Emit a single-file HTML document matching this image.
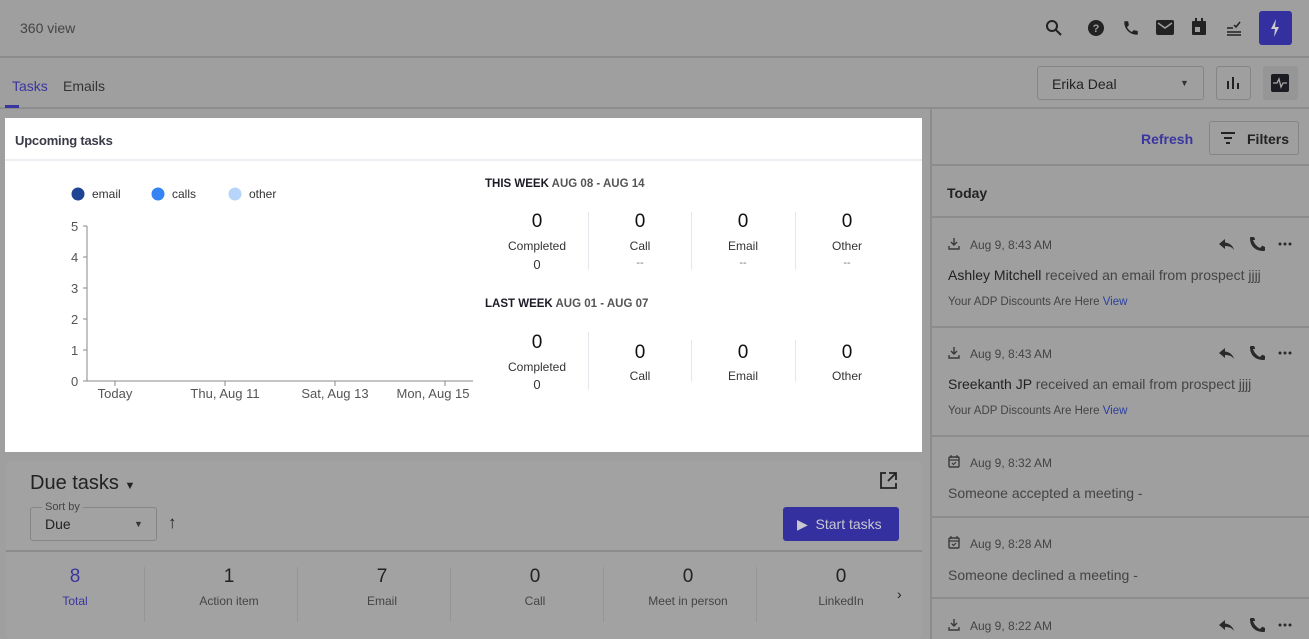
<!DOCTYPE html><html><head><style>
*{box-sizing:border-box;margin:0;padding:0}
body{width:1309px;height:639px;background:#9f9f9f;font-family:"Liberation Sans",sans-serif;color:#26262e;position:relative;overflow:hidden}
.a{position:absolute;white-space:nowrap}
.hl{position:absolute;background:#8c8c8c;height:2px}
.c{text-align:center;transform:translateX(-50%)}
svg{position:absolute}
</style></head><body>
<svg width="0" height="0"><defs>
<g id="acts"><path d="M8 3L2 8l6 5V10c4 0 7 1 9 4-1-4-4-7-9-7.5z" fill="#2a2a2a"/><path d="M36 4c1 3 3 6 7 8l2-2c.3-.3.6-.3 1 0l2 1v3c0 .5-.3 1-1 1C38 15 33 10 33 2c0-.6.4-1 1-1h3l1 2c.1.4 0 .7-.2 1z" fill="#2a2a2a"/><circle cx="63" cy="8" r="1.5" fill="#2a2a2a"/><circle cx="68" cy="8" r="1.5" fill="#2a2a2a"/><circle cx="73" cy="8" r="1.5" fill="#2a2a2a"/></g>
<g id="dl"><path d="M6 1v7M3 5l3 3 3-3M1 9v3h10V9" stroke="#3a3a3a" stroke-width="1.4" fill="none"/></g>
<g id="cal"><rect x="1" y="2" width="10" height="10" rx="1" fill="none" stroke="#3a3a3a" stroke-width="1.4"/><path d="M3 0v3M9 0v3M1 5h10M4 8l1.5 1.5L8 7" stroke="#3a3a3a" stroke-width="1.2" fill="none"/></g>
</defs></svg>
<div class="a" style="left:20px;top:20px;font-size:14px;color:#444">360 view</div>
<svg style="left:1045px;top:19px" width="18" height="18" viewBox="0 0 18 18"><circle cx="7" cy="7" r="5" fill="none" stroke="#222" stroke-width="2"/><path d="M11 11l5 5" stroke="#222" stroke-width="2"/></svg>
<svg style="left:1087px;top:19px" width="18" height="18"><circle cx="9" cy="9" r="8" fill="#222"/><text x="9" y="13" font-size="11" fill="#9f9f9f" text-anchor="middle" font-weight="bold" font-family="Liberation Sans">?</text></svg>
<svg style="left:1122px;top:19px" width="18" height="18" viewBox="0 0 24 24"><path d="M6.6 10.8c1.4 2.8 3.8 5.1 6.6 6.6l2.2-2.2c.3-.3.7-.4 1-.2 1.1.4 2.3.6 3.6.6.6 0 1 .4 1 1V20c0 .6-.4 1-1 1C10.6 21 3 13.4 3 4c0-.6.4-1 1-1h3.5c.6 0 1 .4 1 1 0 1.3.2 2.5.6 3.6.1.3 0 .7-.2 1z" fill="#222"/></svg>
<svg style="left:1156px;top:20px" width="18" height="16"><rect width="18" height="15" rx="2" fill="#222"/><path d="M2 3l7 5 7-5" stroke="#9f9f9f" stroke-width="1.6" fill="none"/></svg>
<svg style="left:1191px;top:18px" width="16" height="18"><rect x="1" y="3" width="14" height="14" rx="1" fill="#222"/><rect x="4" y="0" width="2" height="4" fill="#222"/><rect x="10" y="0" width="2" height="4" fill="#222"/><rect x="4" y="9" width="5" height="5" fill="#9f9f9f"/></svg>
<svg style="left:1226px;top:20px" width="16" height="16"><path d="M1 12h14M1 15h14M1 8h6M8 5l2 2 4-5" stroke="#222" stroke-width="1.5" fill="none"/></svg>
<div class="a" style="left:1259px;top:11px;width:33px;height:34px;background:#3430a0;border-radius:3px"></div>
<svg style="left:1269px;top:19px" width="12" height="18"><path d="M7 0L2 10h4l-1 8 5-10H6z" fill="#ccc"/></svg>
<div class="hl" style="left:0;top:56px;width:1309px"></div>
<div class="a" style="left:12px;top:78px;font-size:14px;color:#3a36a0">Tasks</div>
<div class="a" style="left:63px;top:78px;font-size:14px;color:#333">Emails</div>
<div class="hl" style="left:0;top:107px;width:1309px"></div>
<div class="a" style="left:5px;top:105px;width:14px;height:3px;background:#3a36a0"></div>
<div class="a" style="left:1037px;top:66px;width:167px;height:34px;border:1px solid #858585;border-radius:3px"></div>
<div class="a" style="left:1052px;top:76px;font-size:14px;color:#222">Erika Deal</div>
<div class="a" style="left:1180px;top:78px;font-size:9px;color:#333">▼</div>
<div class="a" style="left:1216px;top:66px;width:35px;height:34px;border:1px solid #858585;border-radius:3px"></div>
<svg style="left:1226px;top:75px" width="14" height="14"><path d="M2 6v8M7 2v12M12 8v6" stroke="#222" stroke-width="2"/></svg>
<div class="a" style="left:1263px;top:66px;width:35px;height:34px;background:#969696;border-radius:3px"></div>
<svg style="left:1271px;top:74px" width="18" height="18"><rect width="18" height="18" rx="2" fill="#1b1b22"/><path d="M2 9h4l2-4 2 8 2-4h4" stroke="#aaa" stroke-width="1.3" fill="none"/></svg>
<div class="a" style="left:930px;top:108px;width:2px;height:531px;background:#8c8c8c"></div>
<div class="a" style="left:1141px;top:131px;font-size:14px;color:#3a36a0;font-weight:bold">Refresh</div>
<div class="a" style="left:1209px;top:121px;width:90px;height:34px;border:1px solid #858585;border-radius:3px"></div>
<svg style="left:1221px;top:132px" width="14" height="12"><path d="M0 1h14M3 6h8M5 11h4" stroke="#222" stroke-width="2"/></svg>
<div class="a" style="left:1247px;top:131px;font-size:14px;font-weight:bold;color:#222">Filters</div>
<div class="hl" style="left:932px;top:164px;width:377px"></div>
<div class="a" style="left:947px;top:185px;font-size:14px;font-weight:bold;color:#222">Today</div>
<div class="hl" style="left:932px;top:216px;width:377px"></div>
<svg style="left:948px;top:237px" width="12" height="13"><use href="#dl"/></svg>
<div class="a" style="left:970px;top:238px;font-size:12px;color:#444">Aug 9, 8:43 AM</div>
<svg style="left:1217px;top:236px" width="80" height="17"><use href="#acts"/></svg>
<div class="a" style="left:948px;top:267px;font-size:14px;color:#222">Ashley Mitchell <span style="color:#444">received an email from prospect jjjj</span></div>
<div class="a" style="left:948px;top:296px;font-size:11.5px;color:#444">Your ADP Discounts Are Here <span style="color:#2a3fa0">View</span></div>
<div class="hl" style="left:932px;top:326px;width:377px"></div>
<svg style="left:948px;top:346px" width="12" height="13"><use href="#dl"/></svg>
<div class="a" style="left:970px;top:347px;font-size:12px;color:#444">Aug 9, 8:43 AM</div>
<svg style="left:1217px;top:345px" width="80" height="17"><use href="#acts"/></svg>
<div class="a" style="left:948px;top:376px;font-size:14px;color:#222">Sreekanth JP <span style="color:#444">received an email from prospect jjjj</span></div>
<div class="a" style="left:948px;top:405px;font-size:11.5px;color:#444">Your ADP Discounts Are Here <span style="color:#2a3fa0">View</span></div>
<div class="hl" style="left:932px;top:435px;width:377px"></div>
<svg style="left:948px;top:455px" width="12" height="13"><use href="#cal"/></svg>
<div class="a" style="left:970px;top:456px;font-size:12px;color:#444">Aug 9, 8:32 AM</div>
<div class="a" style="left:948px;top:485px;font-size:14px;color:#444">Someone accepted a meeting -</div>
<div class="hl" style="left:932px;top:516px;width:377px"></div>
<svg style="left:948px;top:536px" width="12" height="13"><use href="#cal"/></svg>
<div class="a" style="left:970px;top:537px;font-size:12px;color:#444">Aug 9, 8:28 AM</div>
<div class="a" style="left:948px;top:567px;font-size:14px;color:#444">Someone declined a meeting -</div>
<div class="hl" style="left:932px;top:597px;width:377px"></div>
<svg style="left:948px;top:618px" width="12" height="13"><use href="#dl"/></svg>
<div class="a" style="left:970px;top:619px;font-size:12px;color:#444">Aug 9, 8:22 AM</div>
<svg style="left:1217px;top:617px" width="80" height="17"><use href="#acts"/></svg>
<div class="a" style="left:5px;top:118px;width:917px;height:334px;background:#fff"></div>
<div class="a" style="left:5px;top:159px;width:917px;height:2px;background:#eceef4"></div>
<div class="a" style="left:15px;top:133px;font-size:13px;color:#3a3a48;font-weight:bold;letter-spacing:-0.2px">Upcoming tasks</div>
<svg style="left:60px;top:180px" width="420" height="230" font-family="Liberation Sans" font-size="13" fill="#555">
<circle cx="18" cy="14" r="6.5" fill="#1d4593"/><text x="32" y="18" fill="#333" font-size="12">email</text>
<circle cx="98" cy="14" r="6.5" fill="#3584f5"/><text x="112" y="18" fill="#333" font-size="12">calls</text>
<circle cx="175" cy="14" r="6.5" fill="#b7d4fb"/><text x="189" y="18" fill="#333" font-size="12">other</text>
<path d="M27 46v155h386" stroke="#888" fill="none"/>
<g stroke="#888"><path d="M23 46h4M23 77h4M23 108h4M23 139h4M23 170h4M23 201h4M55 201v5M165 201v5M275 201v5M385 201v5"/></g>
<text x="11" y="51">5</text><text x="11" y="82">4</text><text x="11" y="113">3</text><text x="11" y="144">2</text><text x="11" y="175">1</text><text x="11" y="206">0</text>
<text x="55" y="218" text-anchor="middle">Today</text><text x="165" y="218" text-anchor="middle">Thu, Aug 11</text><text x="275" y="218" text-anchor="middle">Sat, Aug 13</text><text x="373" y="218" text-anchor="middle">Mon, Aug 15</text>
</svg>
<div class="a" style="left:485px;top:178px;font-size:11.5px;font-weight:bold;color:#1c1c28">THIS WEEK <span style="color:#555">AUG 08 - AUG 14</span></div>
<div class="a" style="left:485px;top:298px;font-size:11.5px;font-weight:bold;color:#1c1c28">LAST WEEK <span style="color:#555">AUG 01 - AUG 07</span></div>
<div class="a" style="left:588px;top:212px;width:1px;height:58px;background:#e6e6ec"></div>
<div class="a" style="left:691px;top:212px;width:1px;height:58px;background:#e6e6ec"></div>
<div class="a" style="left:795px;top:212px;width:1px;height:58px;background:#e6e6ec"></div>
<div class="a" style="left:588px;top:332px;width:1px;height:58px;background:#e6e6ec"></div>
<div class="a" style="left:691px;top:340px;width:1px;height:42px;background:#e6e6ec"></div>
<div class="a" style="left:795px;top:340px;width:1px;height:42px;background:#e6e6ec"></div>
<div class="a c" style="left:537px;top:212px;font-size:19px;color:#111;line-height:1.1">0</div>
<div class="a c" style="left:537px;top:239px;font-size:12px;color:#333">Completed</div>
<div class="a c" style="left:537px;top:257px;font-size:13px;color:#333">0</div>
<div class="a c" style="left:640px;top:212px;font-size:19px;color:#111;line-height:1.1">0</div>
<div class="a c" style="left:640px;top:239px;font-size:12px;color:#333">Call</div>
<div class="a c" style="left:640px;top:257px;font-size:11px;color:#777">--</div>
<div class="a c" style="left:743px;top:212px;font-size:19px;color:#111;line-height:1.1">0</div>
<div class="a c" style="left:743px;top:239px;font-size:12px;color:#333">Email</div>
<div class="a c" style="left:743px;top:257px;font-size:11px;color:#777">--</div>
<div class="a c" style="left:847px;top:212px;font-size:19px;color:#111;line-height:1.1">0</div>
<div class="a c" style="left:847px;top:239px;font-size:12px;color:#333">Other</div>
<div class="a c" style="left:847px;top:257px;font-size:11px;color:#777">--</div>
<div class="a c" style="left:537px;top:333px;font-size:19px;color:#111;line-height:1.1">0</div>
<div class="a c" style="left:537px;top:360px;font-size:12px;color:#333">Completed</div>
<div class="a c" style="left:537px;top:377px;font-size:13px;color:#333">0</div>
<div class="a c" style="left:640px;top:343px;font-size:19px;color:#111;line-height:1.1">0</div>
<div class="a c" style="left:640px;top:369px;font-size:12px;color:#333">Call</div>
<div class="a c" style="left:743px;top:343px;font-size:19px;color:#111;line-height:1.1">0</div>
<div class="a c" style="left:743px;top:369px;font-size:12px;color:#333">Email</div>
<div class="a c" style="left:847px;top:343px;font-size:19px;color:#111;line-height:1.1">0</div>
<div class="a c" style="left:847px;top:369px;font-size:12px;color:#333">Other</div>
<div class="a" style="left:6px;top:461px;width:916px;height:178px;background:#a2a2a2;border-radius:4px"></div>
<div class="a" style="left:30px;top:472px;font-size:20px;color:#222">Due tasks <span style="font-size:11px">▼</span></div>
<svg style="left:880px;top:472px" width="17" height="17"><path d="M6 1H1v15h15v-5M9 1h7v7M16 1L8 9" stroke="#222" stroke-width="1.8" fill="none"/></svg>
<div class="a" style="left:30px;top:507px;width:127px;height:34px;border:1px solid #858585;border-radius:3px"></div>
<div class="a" style="left:42px;top:501px;font-size:11px;color:#444;background:#a2a2a2;padding:0 3px">Sort by</div>
<div class="a" style="left:45px;top:516px;font-size:14px;color:#222">Due</div>
<div class="a" style="left:134px;top:519px;font-size:9px;color:#333">▼</div>
<div class="a" style="left:168px;top:513px;font-size:17px;color:#222">↑</div>
<div class="a" style="left:783px;top:507px;width:116px;height:34px;background:#3430a0;border-radius:3px"></div>
<div class="a" style="left:797px;top:516px;font-size:14px;color:#c8c8d0">▶&nbsp; Start tasks</div>
<div class="hl" style="left:6px;top:550px;width:916px"></div>
<div class="a c" style="left:75px;top:566px;font-size:19px;color:#3a36a0">8</div>
<div class="a c" style="left:75px;top:594px;font-size:12px;color:#3a36a0">Total</div>
<div class="a c" style="left:229px;top:566px;font-size:19px;color:#222">1</div>
<div class="a c" style="left:229px;top:594px;font-size:12px;color:#444">Action item</div>
<div class="a c" style="left:382px;top:566px;font-size:19px;color:#222">7</div>
<div class="a c" style="left:382px;top:594px;font-size:12px;color:#444">Email</div>
<div class="a c" style="left:535px;top:566px;font-size:19px;color:#222">0</div>
<div class="a c" style="left:535px;top:594px;font-size:12px;color:#444">Call</div>
<div class="a c" style="left:688px;top:566px;font-size:19px;color:#222">0</div>
<div class="a c" style="left:688px;top:594px;font-size:12px;color:#444">Meet in person</div>
<div class="a c" style="left:841px;top:566px;font-size:19px;color:#222">0</div>
<div class="a c" style="left:841px;top:594px;font-size:12px;color:#444">LinkedIn</div>
<div class="a" style="left:897px;top:586px;font-size:14px;color:#222">›</div>
<div class="a" style="left:144px;top:567px;width:1px;height:55px;background:#959595"></div>
<div class="a" style="left:297px;top:567px;width:1px;height:55px;background:#959595"></div>
<div class="a" style="left:450px;top:567px;width:1px;height:55px;background:#959595"></div>
<div class="a" style="left:603px;top:567px;width:1px;height:55px;background:#959595"></div>
<div class="a" style="left:756px;top:567px;width:1px;height:55px;background:#959595"></div>
</body></html>
